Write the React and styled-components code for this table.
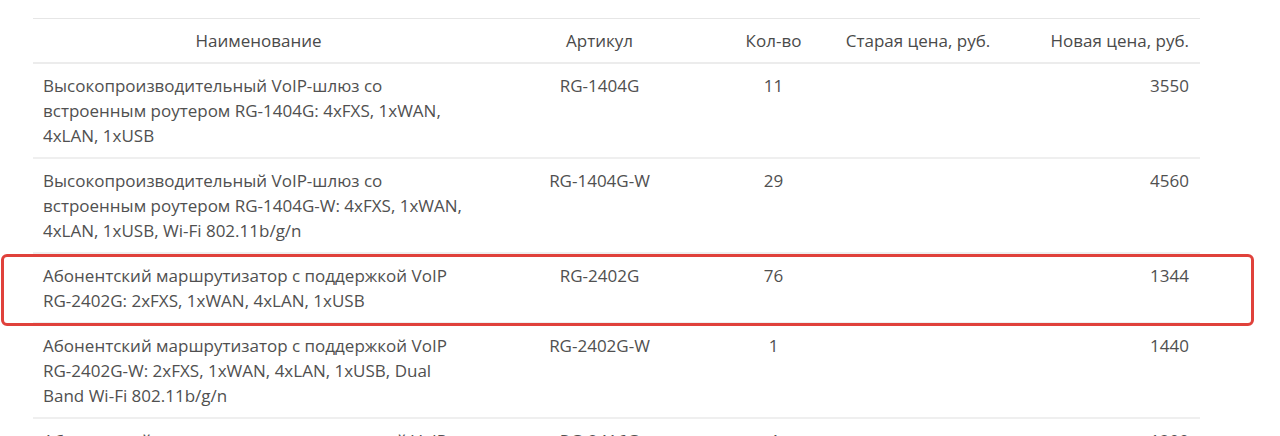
import React from 'react';
import styled, { createGlobalStyle } from 'styled-components';

const GlobalStyle = createGlobalStyle`
  html, body {
    margin: 0;
    padding: 0;
    background: #fff;
  }
  body {
    font-family: 'Open Sans', 'Noto Sans', sans-serif;
    color: #505050;
  }
`;

const Page = styled.div`
  width: 1280px;
  height: 436px;
  overflow: hidden;
  padding: 18px 0 0 33px;
  box-sizing: border-box;
`;

const Table = styled.table`
  width: 1167px;
  table-layout: fixed;
  border-collapse: collapse;
  font-size: 17px;
  line-height: 25px;
`;

const Th = styled.th`
  padding: 9px 11px 9px 10px;
  font-weight: 400;
  color: #4a4a4a;
  text-align: ${({ align }) => align || 'center'};
  border-top: 1px solid #e6e6e6;
  border-bottom: 2px solid #ececec;
  white-space: nowrap;
`;

const Row = styled.tr`
  position: relative;

  ${({ marked }) =>
    marked &&
    `
    &::after {
      content: '';
      position: absolute;
      left: -32px;
      right: -54px;
      top: 1px;
      bottom: -3px;
      border: 3px solid #e0413b;
      border-radius: 6px;
      pointer-events: none;
    }
  `}
`;

const Td = styled.td`
  padding: 9px 11px 9px 10px;
  vertical-align: top;
  text-align: ${({ align }) => align || 'center'};
  border-bottom: 2px solid #efefef;
`;

const items = [
  {
    name: 'Высокопроизводительный VoIP-шлюз со встроенным роутером RG-1404G: 4xFXS, 1xWAN, 4xLAN, 1xUSB',
    sku: 'RG-1404G',
    qty: 11,
    price: 3550,
  },
  {
    name: 'Высокопроизводительный VoIP-шлюз со встроенным роутером RG-1404G-W: 4xFXS, 1xWAN, 4xLAN, 1xUSB, Wi-Fi 802.11b/g/n',
    sku: 'RG-1404G-W',
    qty: 29,
    price: 4560,
  },
  {
    name: 'Абонентский маршрутизатор с поддержкой VoIP RG-2402G: 2xFXS, 1xWAN, 4xLAN, 1xUSB',
    sku: 'RG-2402G',
    qty: 76,
    price: 1344,
    marked: true,
  },
  {
    name: 'Абонентский маршрутизатор с поддержкой VoIP RG-2402G-W: 2xFXS, 1xWAN, 4xLAN, 1xUSB, Dual Band Wi-Fi 802.11b/g/n',
    sku: 'RG-2402G-W',
    qty: 1,
    price: 1440,
  },
  {
    name: 'Абонентский маршрутизатор с поддержкой VoIP RG-2416G: 2xFXS, 1xWAN, 4xLAN',
    sku: 'RG-2416G',
    qty: 4,
    price: 1200,
  },
];

export default function App() {
  return (
    <>
      <GlobalStyle />
      <Page>
        <Table>
          <colgroup>
            <col style={{ width: 452 }} />
            <col style={{ width: 230 }} />
            <col style={{ width: 118 }} />
            <col style={{ width: 171 }} />
            <col style={{ width: 196 }} />
          </colgroup>
          <thead>
            <tr>
              <Th>Наименование</Th>
              <Th>Артикул</Th>
              <Th>Кол-во</Th>
              <Th>Старая цена, руб.</Th>
              <Th align="right">Новая цена, руб.</Th>
            </tr>
          </thead>
          <tbody>
            {items.map((item) => (
              <Row key={item.sku} marked={item.marked}>
                <Td align="left">{item.name}</Td>
                <Td>{item.sku}</Td>
                <Td>{item.qty}</Td>
                <Td></Td>
                <Td align="right">{item.price}</Td>
              </Row>
            ))}
          </tbody>
        </Table>
      </Page>
    </>
  );
}
